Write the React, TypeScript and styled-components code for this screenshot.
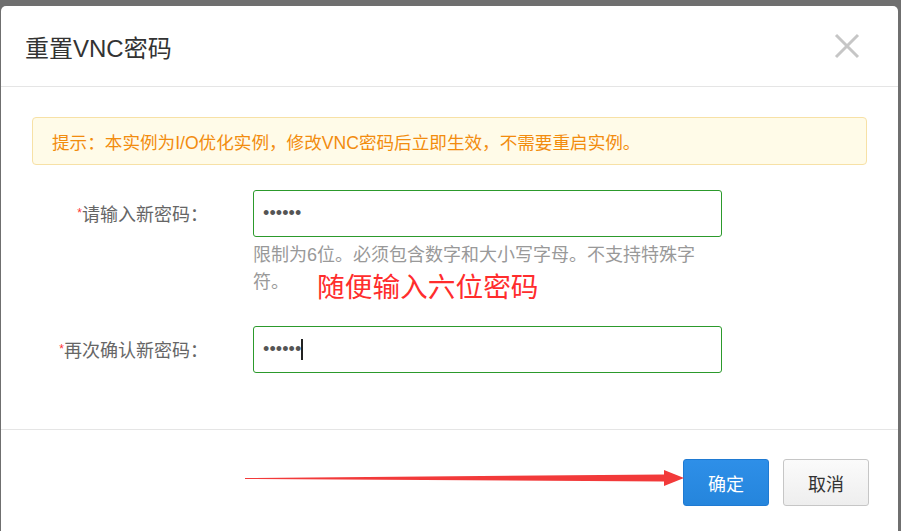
import styled, { createGlobalStyle } from "styled-components";

const GlobalStyle = createGlobalStyle`
  html, body {
    margin: 0;
    padding: 0;
    height: 100%;
    overflow: hidden;
    background: #6f6f6f;
  }
  #root {
    height: 100%;
  }
`;

const Backdrop = styled.div`
  height: 100%;
  padding: 6px 3px 0 1px;
  box-sizing: border-box;
  font-family: "Liberation Sans", "Noto Sans CJK SC", sans-serif;
`;

const Dialog = styled.div`
  background: #fff;
  border-radius: 5px 5px 0 0;
  height: 560px;
  display: flex;
  flex-direction: column;
`;

const Header = styled.div`
  height: 80px;
  border-bottom: 1px solid #e5e5e5;
  display: flex;
  align-items: center;
  justify-content: space-between;
  padding: 0 38px 0 24px;
`;

const Title = styled.h3`
  margin: 0;
  font-size: 24px;
  font-weight: normal;
  color: #333;
`;

const CloseButton = styled.button`
  border: none;
  background: none;
  padding: 0;
  width: 26px;
  height: 26px;
  display: flex;
  align-items: center;
  justify-content: center;
  cursor: pointer;
`;

const Body = styled.div`
  padding: 30px 31px 56px 31px;
  border-bottom: 1px solid #e5e5e5;
  display: flex;
  flex-direction: column;
`;

const Alert = styled.div`
  height: 46px;
  border: 1px solid #f7e1a6;
  background: #fffbe8;
  border-radius: 4px;
  color: #f28c0e;
  font-size: 17.6px;
  display: flex;
  align-items: center;
  padding-left: 19px;
`;

const Row = styled.div<{ $top: number }>`
  display: flex;
  align-items: flex-start;
  margin-top: ${(p) => p.$top}px;
`;

const Label = styled.label`
  width: 176px;
  height: 47px;
  line-height: 47px;
  text-align: right;
  font-size: 18px;
  color: #666;
  margin-right: 45px;
  white-space: nowrap;
`;

const Star = styled.span`
  color: #f33;
  font-size: 12px;
  vertical-align: 4px;
`;

const FieldColumn = styled.div`
  width: 469px;
  position: relative;
`;

const Field = styled.div`
  height: 45px;
  border: 1px solid #2c9a2c;
  border-radius: 3px;
  display: flex;
  align-items: center;
  padding: 0 9px;
  font-size: 18px;
  color: #555;
  letter-spacing: 0.1px;
`;

const Caret = styled.span`
  display: inline-block;
  width: 2px;
  height: 21px;
  background: #222;
`;

const Help = styled.div`
  margin-top: 5px;
  font-size: 18px;
  line-height: 27px;
  color: #999;
`;

const Annotation = styled.span`
  position: absolute;
  left: 64px;
  top: 83px;
  font-size: 27.7px;
  line-height: 30px;
  color: #ff2d2d;
  white-space: nowrap;
`;

const Footer = styled.div`
  position: relative;
  display: flex;
  justify-content: flex-end;
  gap: 14px;
  padding: 29px 29px 30px 0;
`;

const Button = styled.button<{ $primary?: boolean }>`
  width: 86px;
  height: 47px;
  border-radius: 3px;
  font-family: inherit;
  font-size: 18px;
  cursor: pointer;
  border: 1px solid ${(p) => (p.$primary ? "#1f7ad2" : "#c6c6c6")};
  color: ${(p) => (p.$primary ? "#fff" : "#333")};
  background: ${(p) =>
    p.$primary
      ? "linear-gradient(#2e8fe8, #2585dc)"
      : "linear-gradient(#fbfbfb, #eeeeee)"};
`;

const ArrowMark = styled.svg`
  position: absolute;
  left: 0;
  top: 0;
  pointer-events: none;
`;

export default function App() {
  return (
    <>
      <GlobalStyle />
      <Backdrop>
        <Dialog>
          <Header>
            <Title>重置VNC密码</Title>
            <CloseButton aria-label="关闭">
              <svg width="26" height="26" viewBox="0 0 26 26">
                <path
                  d="M2 2 L24 24 M24 2 L2 24"
                  stroke="#c6c6c6"
                  strokeWidth="3"
                  fill="none"
                />
              </svg>
            </CloseButton>
          </Header>
          <Body>
            <Alert>
              提示：本实例为I/O优化实例，修改VNC密码后立即生效，不需要重启实例。
            </Alert>
            <Row $top={25}>
              <Label>
                <Star>*</Star>请输入新密码：
              </Label>
              <FieldColumn>
                <Field>••••••</Field>
                <Help>限制为6位。必须包含数字和大小写字母。不支持特殊字符。</Help>
                <Annotation>随便输入六位密码</Annotation>
              </FieldColumn>
            </Row>
            <Row $top={30}>
              <Label>
                <Star>*</Star>再次确认新密码：
              </Label>
              <FieldColumn>
                <Field>
                  ••••••
                  <Caret />
                </Field>
              </FieldColumn>
            </Row>
          </Body>
          <Footer>
            <ArrowMark width="700" height="100" viewBox="0 0 700 100">
              <polygon
                points="244,48 663,44.5 663,40 683,48 663,56 663,51.5 244,49"
                fill="#f23a3a"
              />
            </ArrowMark>
            <Button $primary>确定</Button>
            <Button>取消</Button>
          </Footer>
        </Dialog>
      </Backdrop>
    </>
  );
}
